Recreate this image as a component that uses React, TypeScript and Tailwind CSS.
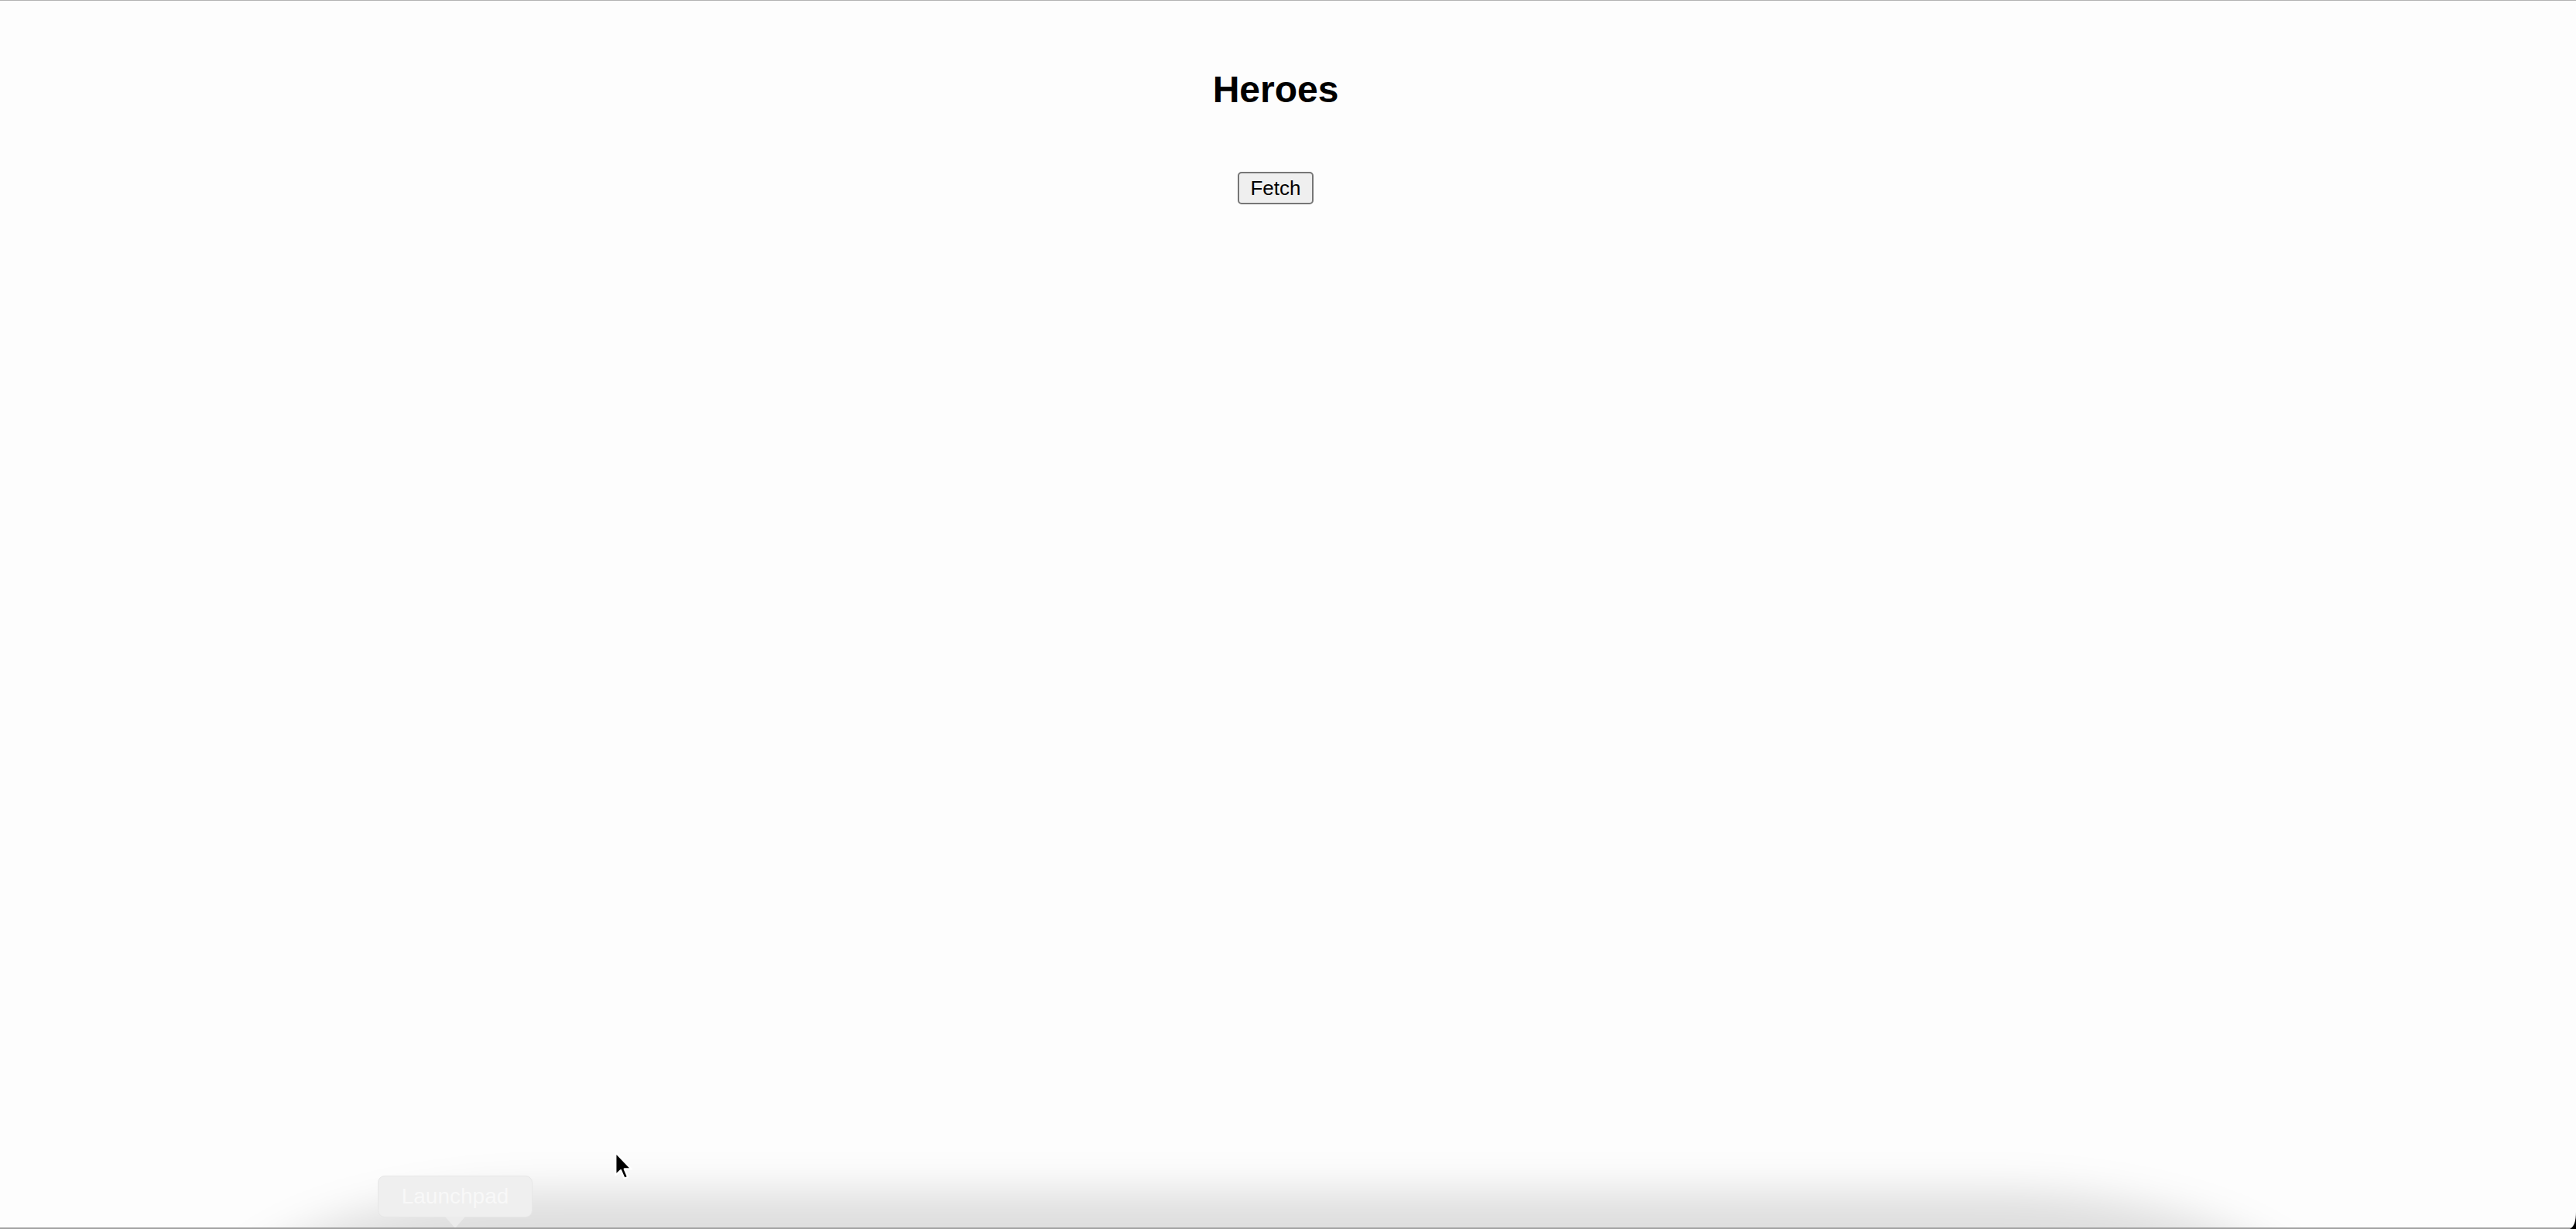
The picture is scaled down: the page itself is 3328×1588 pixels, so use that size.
import React from "react";

function Cursor() {
  return (
    <svg
      width="26"
      height="40"
      viewBox="0 0 18 28"
      className="absolute left-[793px] top-[1486px]"
    >
      <path
        d="M1.5 1.5 L1.5 22 L6.2 17.6 L9.4 25 L12.6 23.6 L9.5 16.4 L15.8 16.4 Z"
        fill="#000"
        stroke="#fff"
        strokeWidth="1.6"
        strokeLinejoin="round"
      />
    </svg>
  );
}

export default function App() {
  return (
    <div
      className="relative h-[1588px] w-full overflow-hidden bg-[#fdfdfd] border-t border-[#b3b3b3]"
      style={{ fontFamily: '"Liberation Sans", Arial, sans-serif' }}
    >
      <div className="flex flex-col items-center pr-[32px]">
        <h2 className="mt-[87px] text-[48px] leading-[56px] font-bold text-black">
          Heroes
        </h2>
        <button
          type="button"
          className="mt-[78px] flex h-[42px] w-[98px] items-center justify-center rounded-[5px] border-2 border-[#767676] bg-[#efefef] text-[26px] leading-none text-black"
        >
          Fetch
        </button>
      </div>

      {/* dock shadow */}
      <div className="pointer-events-none absolute left-[290px] top-[1538px] h-[320px] w-[2700px] rounded-[420px/160px] bg-black/[0.12] blur-[26px]" />

      {/* Launchpad tooltip */}
      <div className="pointer-events-none absolute left-[488px] top-[1518px] flex flex-col items-center">
        <div className="flex h-[54px] w-[200px] items-center justify-center rounded-[9px] border border-[#e7e7e7] bg-[#efefef] text-[28px] text-[#f8f8f8]">
          Launchpad
        </div>
        <svg width="26" height="15" viewBox="0 0 26 15" className="-mt-[1px]">
          <path d="M0 0 L26 0 L13 15 Z" fill="#ececec" />
        </svg>
      </div>

      <Cursor />

      {/* bottom edge */}
      <div className="absolute bottom-0 left-0 h-[2px] w-full bg-[#a3a3a3]" />

      {/* screen corner */}
      <svg
        width="8"
        height="22"
        viewBox="0 0 8 22"
        className="absolute bottom-0 right-0"
      >
        <path d="M8 0 Q8 18 0 22 L8 22 Z" fill="#000" />
      </svg>
    </div>
  );
}
